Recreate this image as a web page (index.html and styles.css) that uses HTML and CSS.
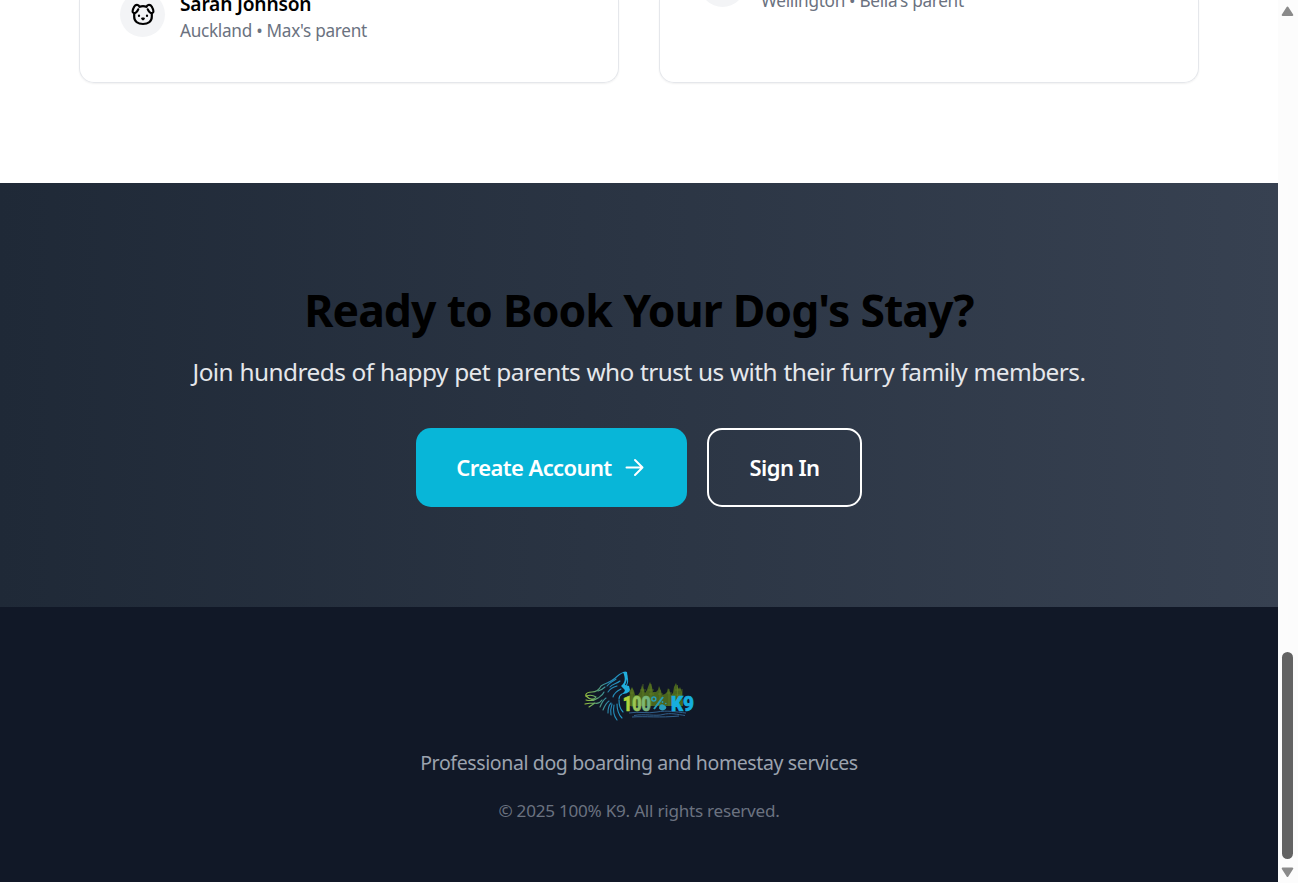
FILE: index.html
```html
<!DOCTYPE html>
<html lang="en">
<head>
<meta charset="utf-8">
<title>100% K9</title>
<link rel="stylesheet" href="styles.css">
</head>
<body>
<div class="page">
  <section class="testimonials">
    <article class="card">
      <div class="person">
        <div class="avatar">
          <svg width="24" height="24" viewBox="0 0 24 24" fill="none" stroke="#000" stroke-width="2.200" stroke-linecap="round" stroke-linejoin="round"><path d="M8.500 3.700c2-.7 5-.7 7 0"/><path d="M8.500 3.700C7.500 1.300 4.700 1.200 3.300 3.500 2 5.800 1 8.400 2.100 9.500c1.500 1.400 4-.2 5.100-3.100"/><path d="M15.500 3.700c1-2.400 3.800-2.500 5.200-.2 1.300 2.300 2.300 4.900 1.200 6-1.500 1.400-4-.2-5.100-3.100"/><path d="M3.200 10.300v3.500C3.200 18.500 7 21 12 21s8.800-2.500 8.800-7.200v-3.500"/><path d="M8 12.500v.4M16 12.500v.4"/><path d="M11.200 15.500h1.600l-.8.8z"/></svg>
        </div>
        <div class="who">
          <div class="name">Sarah Johnson</div>
          <div class="place">Auckland • Max's parent</div>
        </div>
      </div>
    </article>
    <article class="card card-short">
      <div class="person">
        <div class="avatar"></div>
        <div class="who">
          <div class="place place-b">Wellington • Bella's parent</div>
        </div>
      </div>
    </article>
  </section>
  <section class="cta">
    <h2 class="cta-title">Ready to Book Your Dog's Stay?</h2>
    <p class="cta-text">Join hundreds of happy pet parents who trust us with their furry family members.</p>
    <div class="actions">
      <a class="btn btn-primary"><span>Create Account</span>
        <svg width="25" height="25" viewBox="0 0 25 25" fill="none" stroke="#fff" stroke-width="2" stroke-linecap="round" stroke-linejoin="round"><path d="M4.500 12.500h16M13 5l7.500 7.500L13 20"/></svg>
      </a>
      <a class="btn btn-outline"><span>Sign In</span></a>
    </div>
  </section>
  <footer class="footer">
    <svg class="logo" width="130" height="60" viewBox="0 0 130 60">
      <defs>
        <linearGradient id="wolf" x1="10" y1="0" x2="56" y2="0" gradientUnits="userSpaceOnUse"><stop offset="0" stop-color="#a2c935"/><stop offset=".3" stop-color="#579f78"/><stop offset=".55" stop-color="#2484b0"/><stop offset="1" stop-color="#20a8d8"/></linearGradient>
        <linearGradient id="word" x1="0" y1="0" x2="1" y2="0"><stop offset="0" stop-color="#c0d92c"/><stop offset="1" stop-color="#68ad8c"/></linearGradient>
      </defs>
      <path fill="#4a651e" d="M55 35l1-4-1-1 2-3 1-2 2 4 1 4 3 0 2-3 1-3 1-4 2 5 1 3 2-3 1-3 2-5 2 5 1 5 3 0 2-2 1-4 2 5 1 4 3-1 2-2 1-4 2 4 1 3 2-2 1-6 2-4 1 3 2 3 1-2 2 5v4l1 6v4H55z"/>
      <path stroke="#668326" stroke-width=".6" fill="none" d="M58 27v18M69 22v23M77 22v22M86 28v17M95 27v17M103.500 23v21M108 27v8M56 31h4M66 28h6M74 28h6M75 32h5M84 32h5M93 31h5M101 28h6M101 33h6"/>
      <g fill="none" stroke="url(#wolf)" stroke-width="1.100" stroke-linecap="round" stroke-linejoin="round">
        <path d="M12 34c-1-3 3-4 6-4 4 0 7-2 9-6 5-3 10-4 13-7 5-4 7-7 12-7l1 5c1 3 1 6-1 9"/>
        <path d="M12 34c3-1 7-1 10 1-2 3-6 3-10-1zM24 29c3-1 5-2 7-4M12 38c4 1 8 1 12-2 3-2 5-3 6-6M11 42c4-1 7-1 10-1M15 45l6-4M20 41c3 1 6 0 8-3"/>
        <path d="M26 45c2-5 3-7 6-9M29 48c2-5 3-7 6-9M34 51c0-5 1-8 3-10M37 53c-1-5 0-8 1-11M43 58c-4-5-4-10-3-15M48 56c-4-4-5-9-5-14M49 50c-3-3-4-8-4-12"/>
        <path d="M42 17c-4 3-7 4-9 7M46 19c-4 3-8 3-10 6M43 24c-4 1-7 3-9 6M47 27c-4 2-7 4-8 8M48 32c-2 1-3 3-3 5"/>
      </g>
      <path fill="#21afde" d="M49 10l4 0c1 5 0 8-2 13l4 1 1 4c-1 3-5 4-8 4 2-2 4-3 2-5l-3-3c4-3 5-7 2-14z"/>
      <path fill="none" stroke="#315f8b" stroke-width="1" d="M55 51c10-2 18 1 28-1s19 0 29 1M60 53.500c10-2 22 1 29-1s15 0 22 1M58 55c13-1 28 1 47-1"/>
      <g class="wordmark" stroke-width=".7">
        <text fill="url(#word)" stroke="url(#word)" x="48.800" y="48.700" textLength="28" lengthAdjust="spacingAndGlyphs">100</text>
        <text fill="#16aedf" stroke="#16aedf" x="97" y="48.700" textLength="23" lengthAdjust="spacingAndGlyphs">K9</text>
      </g>
      <g fill="#289cb9" stroke="#289cb9"><path fill="none" stroke-width="2" d="M80 47l9-12"/><circle cx="79.800" cy="37" r="2" fill="none" stroke-width="1.500"/><path stroke="none" d="M85 46.500c0-3 2-5 4-4s4 2 3 4-5 3-7 0z"/><circle cx="84.500" cy="42" r=".8" stroke="none"/><circle cx="88.500" cy="40" r=".9" stroke="none"/><circle cx="91.800" cy="41.500" r=".8" stroke="none"/></g>
    </svg>
    <p class="tagline">Professional dog boarding and homestay services</p>
    <p class="copyright">© 2025 100% K9. All rights reserved.</p>
  </footer>
</div>
<div class="scrollbar">
  <svg width="13" height="11" viewBox="0 0 13 11"><path d="M6.500 1.500L11.300 9H1.700z" fill="#8a8a8a" stroke="#8a8a8a" stroke-width="2" stroke-linejoin="round"/></svg>
  <div class="thumb"></div>
  <svg width="13" height="11" viewBox="0 0 13 11"><path d="M6.500 9L11.300 1.500H1.700z" fill="#8a8a8a" stroke="#8a8a8a" stroke-width="2" stroke-linejoin="round"/></svg>
</div>
</body>
</html>
```
FILE: styles.css
```css
* { box-sizing: border-box; }
body {
  margin: 0;
  height: 883px;
  display: flex;
  overflow: hidden;
  background: #fff;
  color: #000;
  font-family: "Segoe UI", "Noto Sans", sans-serif;
}
.page { width: 1278px; height: 882px; display: flex; flex-direction: column; }
h2, p { margin: 0; white-space: nowrap; }

.testimonials {
  height: 183px;
  padding: 0 79px;
  display: grid;
  grid-template-columns: 1fr 1fr;
  gap: 40px;
  align-items: start;
  overflow: hidden;
}
.card {
  height: 83px;
  padding: 0 40px 45px;
  display: flex;
  align-items: flex-end;
  border: 1px solid #e5e7eb;
  border-top: 0;
  border-radius: 0 0 15px 15px;
  box-shadow: 0 1px 2px rgba(0, 0, 0, .06);
}
.card-short { padding-bottom: 75px; }
.person { display: flex; align-items: center; gap: 15px; height: 45px; flex-shrink: 0; }
.avatar {
  width: 45px;
  height: 45px;
  border-radius: 50%;
  background: #f3f4f6;
  display: flex;
  align-items: center;
  justify-content: center;
}
.who { display: flex; flex-direction: column; justify-content: flex-end; height: 59px; white-space: nowrap; }
.name { font-size: 19.200px; font-weight: 600; line-height: 28px; letter-spacing: -.2px; }
.place { font-size: 17.200px; line-height: 26px; color: #6b7280; letter-spacing: -.29px; }
.place-b { padding-left: 1px; letter-spacing: -.31px; }

.cta {
  height: 424px;
  padding-top: 99px;
  display: flex;
  flex-direction: column;
  align-items: center;
  background: linear-gradient(to right, #1f2937, #374151);
}
.cta-title { font-size: 44.500px; line-height: 56px; font-weight: 700; letter-spacing: -.97px; word-spacing: .6px; }
.cta-text { margin-top: 16px; font-size: 24.400px; line-height: 35px; color: #e5e7eb; letter-spacing: -.55px; word-spacing: .5px; }
.actions { margin-top: 39px; display: flex; gap: 20px; }
.btn {
  height: 79px;
  display: flex;
  align-items: center;
  justify-content: center;
  gap: 10px;
  border-radius: 15px;
  color: #fff;
  font-size: 22px;
  font-weight: 600;
  letter-spacing: -.61px;
  white-space: nowrap;
}
.btn span { padding-bottom: 2px; }
.btn-primary { width: 271px; background: #08b6d8; }
.btn-outline { width: 155px; border: 2px solid #fff; }

.footer {
  height: 275px;
  padding-top: 55px;
  display: flex;
  flex-direction: column;
  align-items: center;
  background: #111827;
}
.logo { flex-shrink: 0; }
.wordmark { font-family: "Roboto", sans-serif; font-size: 21px; font-weight: 900; }
.tagline { margin-top: 26px; font-size: 19.500px; line-height: 30px; color: #9ca3af; letter-spacing: -.38px; }
.copyright { margin-top: 20px; font-size: 17.100px; line-height: 25px; color: #6b7280; letter-spacing: -.24px; }

.scrollbar {
  width: 20px;
  height: 883px;
  padding: 6px 1px 5px 0;
  display: flex;
  flex-direction: column;
  align-items: center;
  background: #fcfcfc;
}
.thumb { width: 11px; height: 207px; margin: auto 0 8px; border-radius: 6px; background: #636363; }
```
